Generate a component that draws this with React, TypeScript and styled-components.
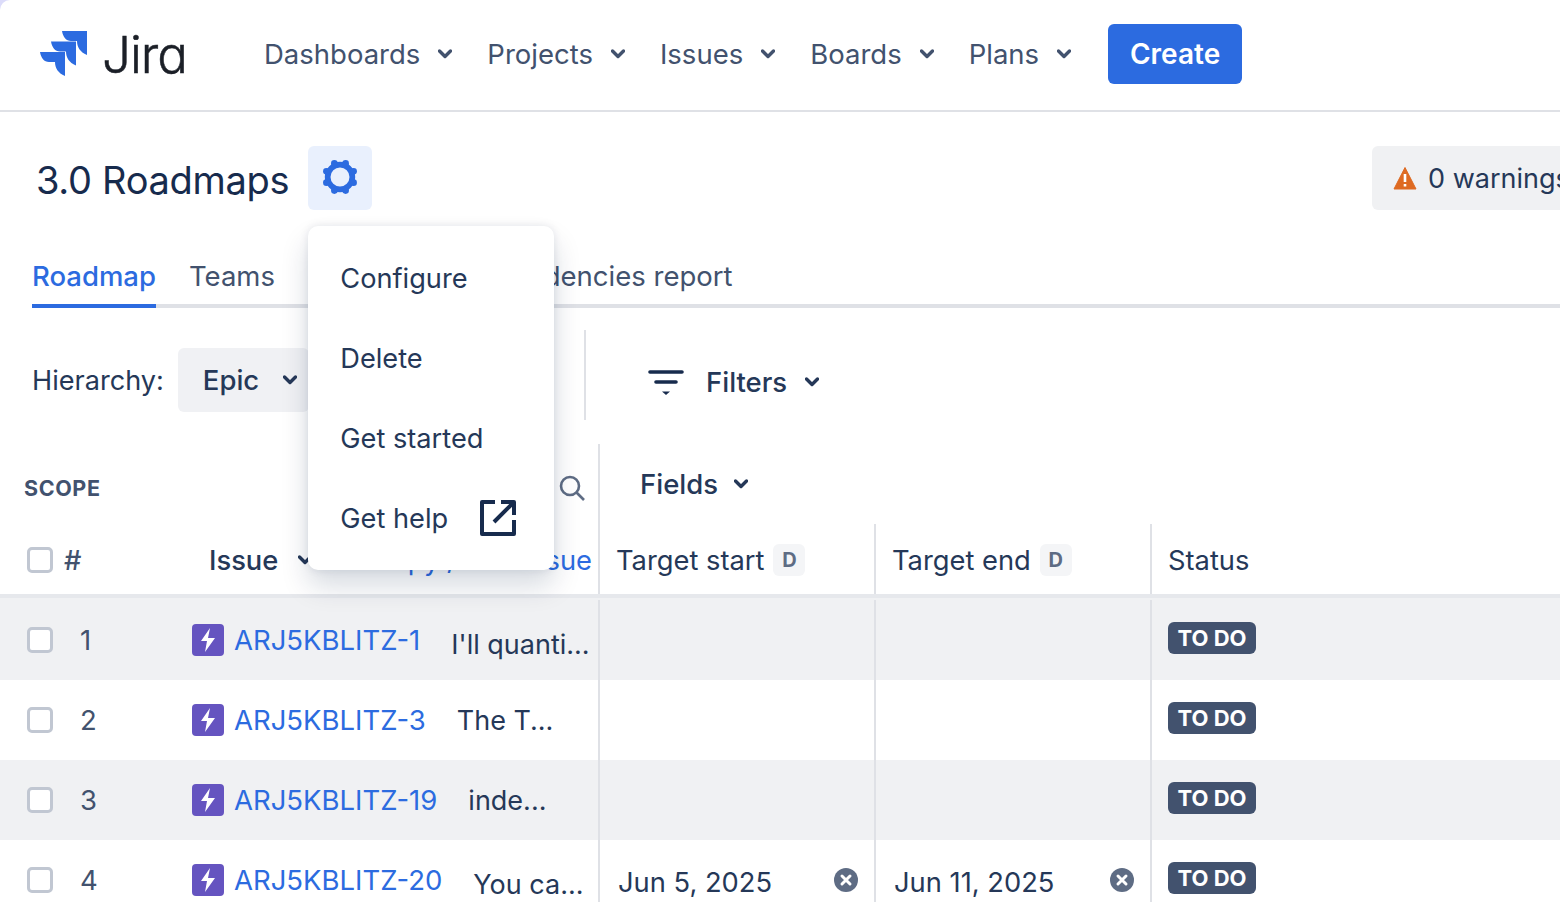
import React from "react";
import styled, { createGlobalStyle } from "styled-components";

const Global = createGlobalStyle`
  html, body { margin: 0; padding: 0; background: #dcdcfa; }
  body { font-family: Inter, "Liberation Sans", sans-serif; font-size: 27.5px; color: #253858; overflow: hidden; }
  * { box-sizing: border-box; }
`;

const Page = styled.div`
  width: 1560px; height: 902px; overflow: hidden; background: #fff; border-top-left-radius: 10px;
`;
const Header = styled.header`
  height: 112px; padding: 0 0 2px 40px; display: flex; align-items: center; border-bottom: 2px solid #dfe1e6;
`;
const LogoWrap = styled.div`
  display: flex; align-items: center; gap: 14px; width: 224px; flex-shrink: 0;
`;
const LogoWord = styled.span`
  font-size: 51px; font-weight: 300; color: #1b1f27; line-height: 1; letter-spacing: -1px; -webkit-text-stroke: 0.5px #1b1f27;
  font-feature-settings: "cv11";
`;
const Nav = styled.nav`
  display: flex; align-items: center; gap: 35px;
`;
const NavItem = styled.div`
  display: flex; align-items: center; gap: 18px; color: #42526e;
`;
const CreateButton = styled.button`
  margin-left: 2px; width: 134px; height: 60px; border: 0; border-radius: 6px; background: #2c6be0; color: #fff;
  font: 600 28px Inter, sans-serif;
`;
const TitleRow = styled.div`
  display: flex; align-items: center; padding: 34px 0 0 36px; height: 98px;
`;
const Title = styled.h1`
  margin: 4px 19px 0 0; font-size: 38px; font-weight: 400; color: #172b4d; line-height: 1; letter-spacing: -0.3px;
`;
const GearAnchor = styled.div`
  position: relative; width: 64px; height: 64px;
`;
const GearButton = styled.div`
  width: 64px; height: 64px; padding-bottom: 2px; border-radius: 6px; background: #e9f0fd; display: flex; align-items: center; justify-content: center;
`;
const Menu = styled.div`
  position: absolute; z-index: 5; top: 80px; left: 0; width: 246px; height: 344px; padding: 12px 0; background: #fff;
  border-radius: 10px; box-shadow: 0 16px 28px rgba(9,30,66,.16), 0 0 8px rgba(9,30,66,.1);
`;
const MenuItem = styled.div`
  height: 80px; padding-left: 32px; display: flex; align-items: center; gap: 31px; color: #253858; font-size: 27.2px;
`;
const WarningButton = styled.div`
  margin-left: auto; margin-right: -52px; width: 240px; height: 64px; flex-shrink: 0; padding-left: 21px; gap: 11px;
  border-radius: 6px; background: #f0f1f3; display: flex; align-items: center; color: #253858; font-size: 27px; white-space: nowrap;
`;
const Tabs = styled.div`
  margin: 38px 0 0 32px; height: 60px; display: flex; gap: 33px; border-bottom: 4px solid #dfe1e6;
`;
const Tab = styled.div<{ $active?: boolean }>`
  height: 60px; padding-top: 11px; white-space: nowrap;
  color: ${p => (p.$active ? "#2c6be0" : "#42526e")};
  font-weight: ${p => (p.$active ? 500 : 400)};
  border-bottom: 4px solid ${p => (p.$active ? "#2c6be0" : "transparent")};
  &:last-child { margin-left: 1px; }
`;
const Toolbar = styled.div`
  height: 90px; margin-top: 22px; display: flex;
`;
const HierarchyGroup = styled.div`
  width: 584px; padding: 18px 0 0 32px; display: flex; align-items: flex-start; gap: 14px;
`;
const HierarchyLabel = styled.span`
  height: 64px; line-height: 65px; color: #253858; font-size: 27.1px;
`;
const SelectBox = styled.div`
  height: 64px; padding: 0 12px 0 25px; display: flex; align-items: center; gap: 24px; background: #f0f1f4; border-radius: 6px;
  color: #253858; font-weight: 500;
`;
const VLine = styled.div`
  width: 2px; background: #dfe1e6;
`;
const FiltersGroup = styled.div`
  margin: 16px 0 0 62px; height: 72px; display: flex; align-items: center; color: #253858; font-weight: 500;
`;
const FiltersLabel = styled.span`
  margin: 0 18px 0 22px;
`;
const ScopeRow = styled.div`
  margin-top: 24px; height: 80px; display: flex;
`;
const ScopeCell = styled.div`
  width: 600px; flex-shrink: 0; padding: 8px 13px 0 24px; display: flex; align-items: center; justify-content: space-between;
  border-right: 2px solid #dfe1e6;
`;
const ScopeLabel = styled.span`
  font-size: 21.5px; font-weight: 700; color: #42526e; letter-spacing: .6px;
`;
const FieldsCell = styled.div`
  padding: 0 0 0 40px; display: flex; align-items: center; gap: 16px; color: #253858; font-weight: 500;
`;
const HeadRow = styled.div`
  display: grid; grid-template-columns: 600px 276px 276px 1fr; height: 70px;
`;
const HeadCell = styled.div`
  display: flex; align-items: center; gap: 9px; padding: 2px 0 0 16px; border-right: 2px solid #dfe1e6; color: #253858; white-space: nowrap; font-size: 27.3px;
  &:last-child { border-right: 0; }
`;
const HeadLead = styled(HeadCell)`
  padding: 2px 6px 0 27px; gap: 0;
`;
const Check = styled.span`
  display: block; width: 26px; height: 26px; flex-shrink: 0; background: #fff; border: 3px solid #c1c7d2; border-radius: 5px;
`;
const Hash = styled.span`
  width: 145px; margin-left: 11px; font-weight: 500; color: #42526e; flex-shrink: 0;
`;
const IssueHead = styled.span`
  display: flex; align-items: center; gap: 20px; font-weight: 500; flex-shrink: 0;
`;
const AddLink = styled.span`
  margin-left: auto; color: #2c6be0;
`;
const BadgeD = styled.span`
  width: 32px; height: 32px; border-radius: 6px; background: #f4f5f7; color: #5e6c84; font-size: 20px; font-weight: 700;
  display: flex; align-items: center; justify-content: center;
`;
const HeadRule = styled.div`
  height: 6px; background: #f0f1f3; border-top: 4px solid #e6e8ec;
`;
const Row = styled.div<{ $shaded: boolean }>`
  display: grid; grid-template-columns: 600px 276px 276px 1fr; height: 80px; background: ${p => (p.$shaded ? "#f0f1f3" : "#fff")};
`;
const Cell = styled.div`
  display: flex; align-items: center; padding-left: 16px; border-right: 2px solid #dfe1e6;
  &:last-child { border-right: 0; }
`;
const LeadCell = styled(Cell)`
  padding-left: 27px;
`;
const Num = styled.span`
  width: 112px; margin-left: 27px; flex-shrink: 0; color: #42526e;
`;
const EpicIcon = styled.span`
  width: 32px; height: 32px; flex-shrink: 0; margin-right: 10px; border-radius: 4px; background: #6554c0; display: flex; align-items: center; justify-content: center;
`;
const IssueKey = styled.a`
  margin-right: 31px; color: #2c6be0; white-space: nowrap;
`;
const Summary = styled.span<{ $drop: number }>`
  margin-top: ${p => p.$drop}px; color: #253858; font-size: 27px; white-space: nowrap;
`;
const DateCell = styled(Cell)`
  padding: 4px 16px 0 18px; justify-content: space-between; color: #253858; font-size: 27.3px;
`;
const ClearIcon = styled.span`
  display: flex; margin-top: -4px;
`;
const Lozenge = styled.span`
  width: 88px; height: 32px; margin-top: -4px; border-radius: 6px; background: #42526e; color: #fff; font-size: 22px; font-weight: 700;
  display: flex; align-items: center; justify-content: center; white-space: nowrap;
`;

const Chevron = ({ color = "#42526e", weight = 3.4 }: { color?: string; weight?: number }) => (
  <svg width="14" height="12" viewBox="0 0 14 12" fill="none"><path d="M1.5 3l5.5 5.5L12.5 3" stroke={color} strokeWidth={weight} strokeLinecap="round" strokeLinejoin="round" /></svg>
);
const markShape = "M0 0H25V24C18 21 15 16 15 10H9C4 10 1 6 0 0Z";
const JiraMark = () => (
  <svg width="48" height="46" viewBox="0 0 48 46" fill="#2c6be0">
    <path d={markShape} transform="translate(22 0)" />
    <path d={markShape} transform="translate(11 10.5)" />
    <path d={markShape} transform="translate(0 21)" />
  </svg>
);
const Gear = () => (
  <svg width="38" height="38" viewBox="0 0 40 40" fill="none">
    <circle cx="20" cy="20" r="13" stroke="#2c6be0" strokeWidth="6" />
    {[0, 45, 90, 135, 180, 225, 270, 315].map(a => (
      <circle key={a} cx={20 + 15.5 * Math.cos((a * Math.PI) / 180 + Math.PI / 8)} cy={20 + 15.5 * Math.sin((a * Math.PI) / 180 + Math.PI / 8)} r="3.5" fill="#2c6be0" />
    ))}
  </svg>
);
const ExternalLink = () => (
  <svg width="38" height="38" viewBox="0 0 38 38" fill="none" stroke="#172b4d" strokeWidth="4" strokeLinejoin="round">
    <path d="M16 3H3v32h32V21" />
    <path d="M15 23L34 4M22 3h13v13" />
  </svg>
);
const WarnIcon = () => (
  <svg width="24" height="24" viewBox="0 0 24 24">
    <path d="M12 1.5L23 23H1z" fill="#de6a22" stroke="#de6a22" strokeLinejoin="round" />
    <path d="M12 8v8M12 18v2.5" stroke="#fff" strokeWidth="2.6" />
  </svg>
);
const FilterIcon = () => (
  <svg width="36" height="26" viewBox="0 0 36 26" fill="none" stroke="#172b4d" strokeWidth="3.6" strokeLinecap="round">
    <path d="M2 3h32M8 13h20" />
    <path d="M14 22.5h8L18 26z" fill="#172b4d" stroke="none" />
  </svg>
);
const Search = () => (
  <svg width="26" height="26" viewBox="0 0 26 26" fill="none" stroke="#5e6c84" strokeWidth="2.6">
    <circle cx="11" cy="11" r="9" />
    <path d="M17.5 17.5L25 25" />
  </svg>
);
const Bolt = () => (
  <svg width="18" height="24" viewBox="0 0 18 24" fill="#fff"><path d="M11 0L2 13h6l-2 11 10-14h-7z" /></svg>
);
const Clear = () => (
  <svg width="24" height="24" viewBox="0 0 24 24">
    <circle cx="12" cy="12" r="12" fill="#5e6c84" />
    <path d="M8 8l8 8M16 8l-8 8" stroke="#fff" strokeWidth="3" strokeLinecap="round" />
  </svg>
);

const navItems = ["Dashboards", "Projects", "Issues", "Boards", "Plans"];
const rows = [
  { n: 1, key: "ARJ5KBLITZ-1", text: "I'll quanti...", drop: 8, start: "", end: "" },
  { n: 2, key: "ARJ5KBLITZ-3", text: "The T...", drop: 0, start: "", end: "" },
  { n: 3, key: "ARJ5KBLITZ-19", text: "inde...", drop: 0, start: "", end: "" },
  { n: 4, key: "ARJ5KBLITZ-20", text: "You ca...", drop: 8, start: "Jun 5, 2025", end: "Jun 11, 2025" },
];

export default function App() {
  return (
    <Page>
      <Global />
      <Header>
        <LogoWrap><JiraMark /><LogoWord>Jira</LogoWord></LogoWrap>
        <Nav>
          {navItems.map(i => <NavItem key={i}>{i}<Chevron /></NavItem>)}
          <CreateButton>Create</CreateButton>
        </Nav>
      </Header>
      <TitleRow>
        <Title>3.0 Roadmaps</Title>
        <GearAnchor>
          <GearButton><Gear /></GearButton>
          <Menu>
            <MenuItem>Configure</MenuItem>
            <MenuItem>Delete</MenuItem>
            <MenuItem>Get started</MenuItem>
            <MenuItem>Get help<ExternalLink /></MenuItem>
          </Menu>
        </GearAnchor>
        <WarningButton><WarnIcon />0 warnings</WarningButton>
      </TitleRow>
      <Tabs>
        <Tab $active>Roadmap</Tab>
        <Tab>Teams</Tab>
        <Tab>Releases</Tab>
        <Tab>Dependencies report</Tab>
      </Tabs>
      <Toolbar>
        <HierarchyGroup>
          <HierarchyLabel>Hierarchy:</HierarchyLabel>
          <SelectBox>Epic<Chevron color="#253858" /></SelectBox>
          <HierarchyLabel>to</HierarchyLabel>
          <SelectBox>Story<Chevron color="#253858" /></SelectBox>
        </HierarchyGroup>
        <VLine />
        <FiltersGroup><FilterIcon /><FiltersLabel>Filters</FiltersLabel><Chevron color="#253858" /></FiltersGroup>
      </Toolbar>
      <ScopeRow>
        <ScopeCell><ScopeLabel>SCOPE</ScopeLabel><Search /></ScopeCell>
        <FieldsCell>Fields<Chevron color="#253858" /></FieldsCell>
      </ScopeRow>
      <HeadRow>
        <HeadLead>
          <Check /><Hash>#</Hash>
          <IssueHead>Issue<Chevron color="#253858" /></IssueHead>
          <AddLink>Copy / Add issue</AddLink>
        </HeadLead>
        <HeadCell>Target start<BadgeD>D</BadgeD></HeadCell>
        <HeadCell>Target end<BadgeD>D</BadgeD></HeadCell>
        <HeadCell>Status</HeadCell>
      </HeadRow>
      <HeadRule />
      {rows.map((r, i) => (
        <Row key={r.n} $shaded={i % 2 === 0}>
          <LeadCell>
            <Check /><Num>{r.n}</Num>
            <EpicIcon><Bolt /></EpicIcon>
            <IssueKey>{r.key}</IssueKey>
            <Summary $drop={r.drop}>{r.text}</Summary>
          </LeadCell>
          <DateCell>{r.start}{r.start && <ClearIcon><Clear /></ClearIcon>}</DateCell>
          <DateCell>{r.end}{r.end && <ClearIcon><Clear /></ClearIcon>}</DateCell>
          <Cell><Lozenge>TO DO</Lozenge></Cell>
        </Row>
      ))}
    </Page>
  );
}
